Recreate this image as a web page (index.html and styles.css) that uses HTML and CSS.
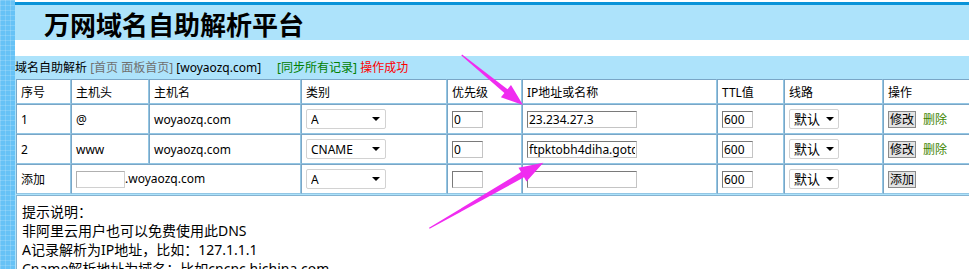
FILE: index.html
```html
<!DOCTYPE html>
<html lang="zh-CN">
<head>
<meta charset="utf-8">
<title>万网域名自助解析平台</title>
<link rel="stylesheet" href="styles.css">
</head>
<body>
<div class="page">
  <aside class="strip"></aside>
  <main class="main">
    <header class="title-band"><h1 class="title">万网域名自助解析平台</h1></header>
    <div class="gap"></div>
    <nav class="nav">域名自助解析 <span class="muted">[首页 面板首页]</span> [woyaozq.com]<span class="sync">[同步所有记录]</span> <span class="ok">操作成功</span></nav>
    <div class="content">
      <table class="records">
        <colgroup>
          <col class="c-no"><col class="c-host"><col class="c-name"><col class="c-type"><col class="c-pri"><col class="c-ip"><col class="c-ttl"><col class="c-line"><col class="c-op">
        </colgroup>
        <thead>
          <tr class="head">
            <th>序号</th><th>主机头</th><th>主机名</th><th>类别</th><th>优先级</th><th>IP地址或名称</th><th>TTL值</th><th>线路</th><th>操作</th>
          </tr>
        </thead>
        <tbody>
          <tr>
            <td>1</td><td>@</td><td>woyaozq.com</td>
            <td><span class="sel sel-type"><select><option>A</option></select></span></td>
            <td><input class="txt pri" type="text" value="0"></td>
            <td><input class="txt ip" type="text" value="23.234.27.3"></td>
            <td><input class="txt ttl" type="text" value="600"></td>
            <td><span class="sel sel-line"><select><option>默认</option></select></span></td>
            <td><button class="btn" type="button">修改</button><a class="del">删除</a></td>
          </tr>
          <tr>
            <td>2</td><td>www</td><td>woyaozq.com</td>
            <td><span class="sel sel-type"><select><option>CNAME</option></select></span></td>
            <td><input class="txt pri" type="text" value="0"></td>
            <td><input class="txt ip" type="text" value="ftpktobh4diha.gotcha.com"></td>
            <td><input class="txt ttl" type="text" value="600"></td>
            <td><span class="sel sel-line"><select><option>默认</option></select></span></td>
            <td><button class="btn" type="button">修改</button><a class="del">删除</a></td>
          </tr>
          <tr>
            <td>添加</td>
            <td colspan="2"><input class="txt host" type="text" value="">.woyaozq.com</td>
            <td><span class="sel sel-type"><select><option>A</option></select></span></td>
            <td><input class="txt pri" type="text" value=""></td>
            <td><input class="txt ip" type="text" value=""></td>
            <td><input class="txt ttl" type="text" value="600"></td>
            <td><span class="sel sel-line"><select><option>默认</option></select></span></td>
            <td><button class="btn" type="button">添加</button></td>
          </tr>
        </tbody>
      </table>
      <div class="tips">
        <p>提示说明：</p>
        <p>非阿里云用户也可以免费使用此DNS</p>
        <p>A记录解析为IP地址，比如：127.1.1.1</p>
        <p>Cname解析地址为域名：比如cncnc.hichina.com</p>
      </div>
    </div>
  </main>
</div>
<svg class="arrows" width="969" height="269" viewBox="0 0 969 269" aria-hidden="true">
  <polygon points="461.3,55.4 504.4,93.0 500.9,97.3 523,105 511.0,84.9 507.5,89.2 462.1,54.6"/>
  <polygon points="429.6,228.8 524.0,177.3 526.5,181.6 543.3,162.7 518.5,167.8 521.0,172.1 429.0,227.8"/>
</svg>
</body>
</html>
```

FILE: styles.css
```css
* { box-sizing: border-box; }
html, body { margin: 0; padding: 0; }
body {
  width: 969px;
  height: 269px;
  overflow: hidden;
  position: relative;
  background: #fff;
  color: #000;
  font-family: "Noto Sans", "Noto Sans CJK SC", sans-serif;
}
.page { display: flex; height: 269px; }
.strip {
  width: 15px;
  flex: none;
  background-color: #66c2f6;
  background-image:
    linear-gradient(90deg, rgba(255,255,255,.16) 1px, transparent 1px),
    linear-gradient(rgba(255,255,255,.16) 1px, transparent 1px);
  background-size: 5px 5px;
}
.main { flex: 1; min-width: 0; overflow: hidden; padding-top: 2px; }
.title-band {
  border-top: 3px solid #0a93d8;
  background: #ade3fb;
  height: 38px;
  padding-left: 29px;
}
.title {
  margin: 0;
  font-family: "Noto Sans CJK SC", sans-serif;
  font-size: 26px;
  font-weight: 700;
  line-height: 37px;
  white-space: nowrap;
}
.gap { height: 16px; }
.nav {
  background: #ade3fb;
  height: 23px;
  line-height: 23px;
  font-size: 12px;
  white-space: nowrap;
}
.muted { color: #707070; }
.sync { color: #008000; margin-left: 16px; }
.ok { color: #ff0000; }
.content { background: #ade3fb; padding-left: 1px; width: 1010px; }
.records {
  border-collapse: separate;
  border-spacing: 0;
  table-layout: fixed;
  width: 987px;
  font-size: 12px;
  margin-bottom: 1px;
  background: #fff;
}
.c-no { width: 55px; }
.c-host { width: 78px; }
.c-name { width: 152px; }
.c-type { width: 146px; }
.c-pri { width: 75px; }
.c-ip { width: 195px; }
.c-ttl { width: 67px; }
.c-line { width: 99px; }
.c-op { width: 120px; }
.records th, .records td {
  border: 1px solid;
  border-color: #7aa6c6 #93c6e4 #93c6e4 #7aa6c6;
  padding: 0 4px;
  text-align: left;
  font-weight: normal;
  white-space: nowrap;
  overflow: hidden;
  vertical-align: middle;
}
.records tr.head { height: 25px; }
.records tbody tr { height: 30px; }
.sel { position: relative; display: inline-block; vertical-align: middle; }
.sel select {
  appearance: none;
  -webkit-appearance: none;
  display: block;
  height: 20px;
  border: 1px solid #d2d2d2;
  border-radius: 2px;
  background: #fff;
  color: #000;
  padding: 0 0 0 4px;
  font-family: inherit;
  font-size: 12px;
  outline: none;
}
.sel::after {
  content: "";
  position: absolute;
  top: 8px;
  border-left: 4px solid transparent;
  border-right: 4px solid transparent;
  border-top: 4px solid #000;
}
.sel-type select { width: 80px; }
.sel-type::after { right: 6px; }
.sel-line select { width: 50px; font-size: 13px; }
.sel-line::after { right: 5px; }
.txt {
  height: 17px;
  border: 1px solid;
  border-color: #7a7a7a #c4c4c4 #c4c4c4 #7a7a7a;
  padding: 0 1px;
  font-family: inherit;
  font-size: 12px;
  color: #000;
  background: #fff;
  vertical-align: middle;
  outline: none;
}
.pri { width: 31px; }
.ip { width: 110px; }
.ttl { width: 31px; }
.host { width: 49px; border-color: #b0b0b0 #d0d0d0 #d0d0d0 #b0b0b0; }
.btn {
  height: 17px;
  padding: 0 1px;
  border: 1px solid #8a8a8a;
  background: #e3e3e3;
  color: #000;
  font-family: inherit;
  font-size: 12px;
  line-height: 15px;
  vertical-align: middle;
}
.del { color: #3d8400; margin-left: 7px; vertical-align: middle; }
.tips {
  background: #fff;
  border: 1px solid #86b2d0;
  padding: 6px 5px 0;
  font-size: 14px;
  line-height: 19px;
  height: 100px;
  white-space: nowrap;
}
.tips p { margin: 0; }
.arrows {
  position: absolute;
  top: 0;
  left: 0;
  pointer-events: none;
  fill: #f02cf0;
}
```
